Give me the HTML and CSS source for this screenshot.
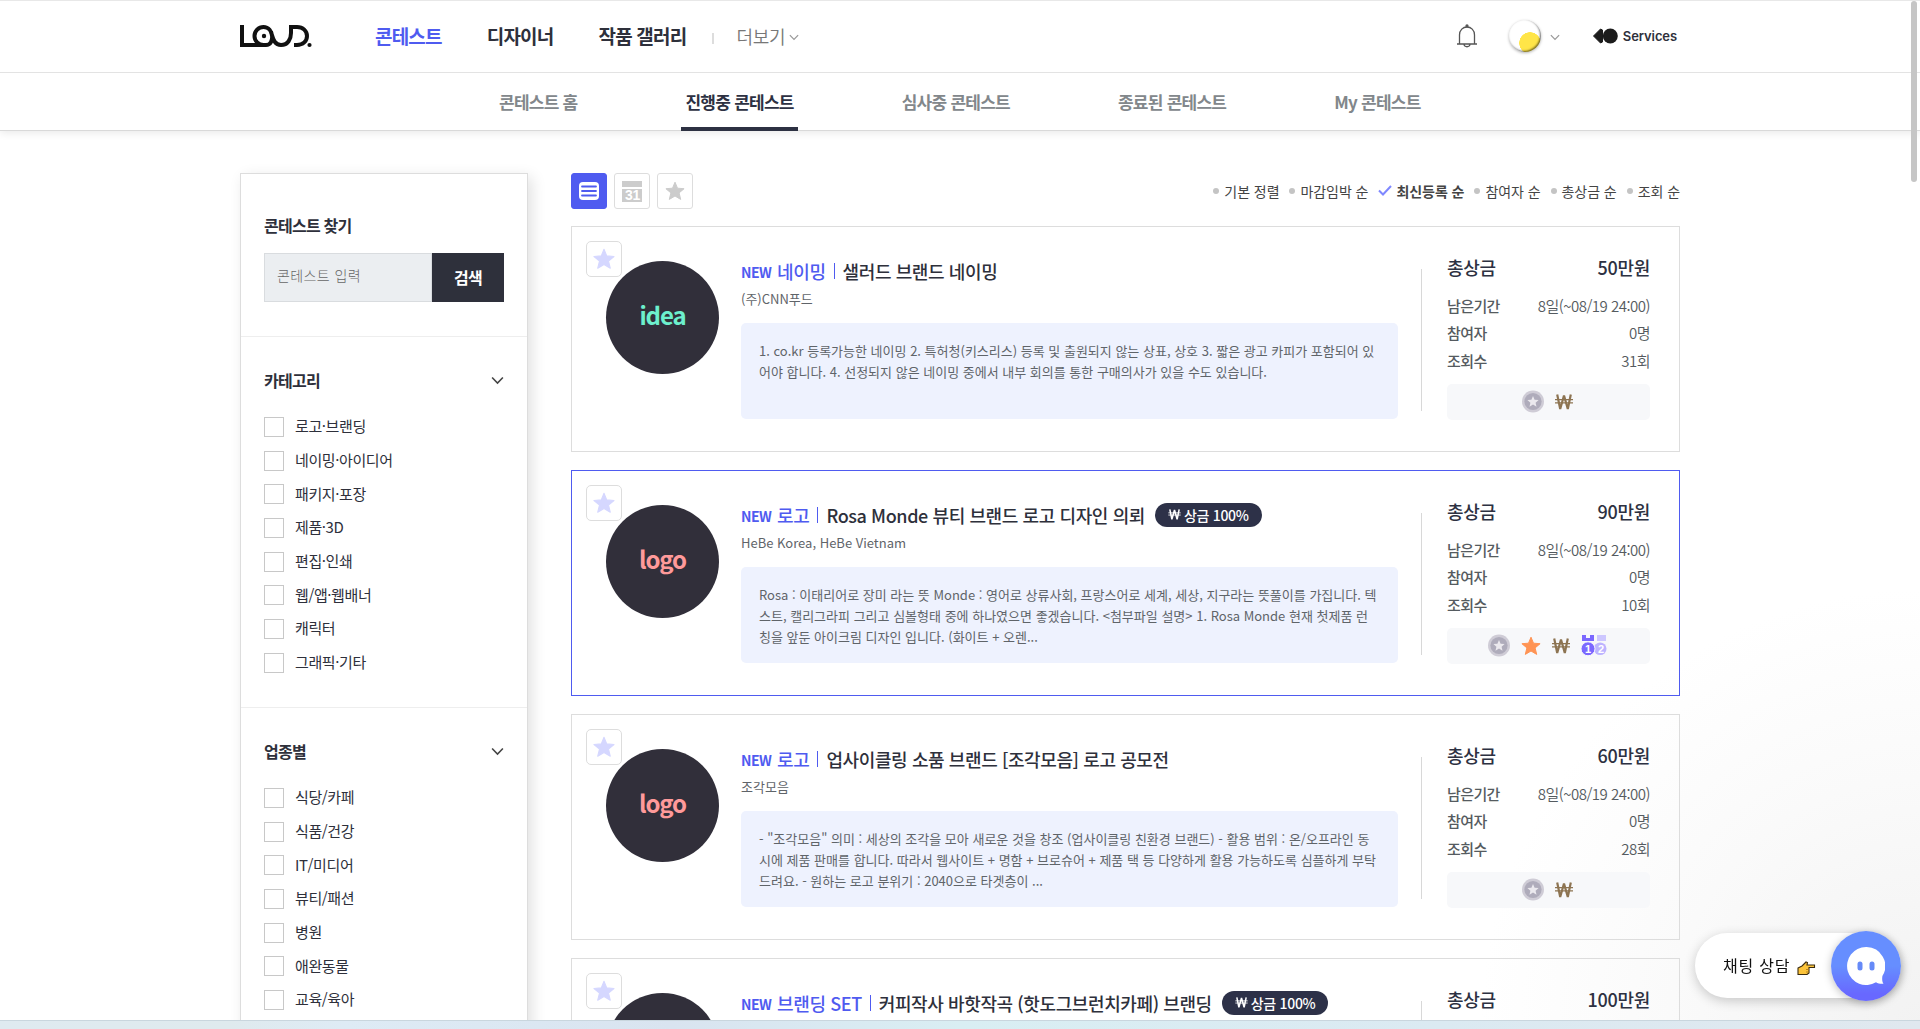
FILE: index.html
```html
<!DOCTYPE html>
<html lang="ko">
<head>
  <meta charset="UTF-8" />
  <meta name="viewport" content="width=device-width, initial-scale=1.0" />
  <title>진행중 콘테스트 - LOUD</title>
  <link rel="stylesheet" href="styles.css">
</head>
<body>
  <!-- 공통 아이콘 -->
  <svg class="sprite" aria-hidden="true">
    <symbol id="i-star" viewBox="0 0 20 20"><path d="M10 1.2l2.5 6 6.6.5-5 4.2 1.6 6.5L10 15l-5.7 3.4 1.6-6.5-5-4.2 6.6-.5z" fill="currentColor" stroke="currentColor" stroke-linejoin="round"/></symbol>
    <symbol id="i-down" viewBox="0 0 14 9"><path d="M1.2 1.2L7 7.2l5.8-6" fill="none" stroke="currentColor" stroke-width="1.7"/></symbol>
    <symbol id="i-medal" viewBox="0 0 22 22"><circle cx="11" cy="11" r="11" fill="#cfccd6"/><circle cx="11" cy="11" r="8.6" fill="#afacbb"/><path d="M11 5.6l1.6 3.6 4 .3-3 2.7.9 4-3.5-2.1-3.5 2.1.9-4-3-2.7 4-.3z" fill="#ebe9ee"/></symbol>
    <symbol id="i-won" viewBox="0 0 18 16"><path d="M2.2.5l3 14.5L9 1.5 12.8 15l3-14.5" fill="none" stroke="currentColor" stroke-width="2.2" stroke-linejoin="bevel"/><path d="M0 5.6h18M0 8.8h18" stroke="currentColor" stroke-width="1.2"/></symbol>
    <symbol id="i-rank" viewBox="0 0 26 21"><path d="M1 0h4v3h4V0h4v6H1z" fill="#7b68ff"/><path d="M16 0h9v6h-9z" fill="#cdc7ff"/><circle cx="19.2" cy="13.8" r="6.3" fill="#bdb4ff"/><circle cx="7" cy="13.8" r="7" fill="#7b68ff" stroke="#f8f9fb"/></symbol>
  </svg>

  <header>
    <div class="nav wrap">
      <svg class="logo" viewBox="0 0 72 24" fill="none" stroke="#111" stroke-width="4">
        <path d="M2 1v20h24c9 0 8-18-2.500-18a8.900 8.900 0 1 0 0 18M31 8c2 6 3 13 10 13 7 0 10-6 10-12V3h6c6 0 10 4 10 9s-4 9-10 9h-3"/>
        <circle cx="24" cy="12" r="2.200" fill="#111" stroke="none"/><circle cx="69.500" cy="21" r="2.100" fill="#111" stroke="none"/>
      </svg>
      <a class="menu on">콘테스트</a>
      <a class="menu designer">디자이너</a>
      <a class="menu gallery">작품 갤러리</a>
      <i class="bar"></i>
      <a class="more">더보기</a>
      <svg class="more-arrow"><use href="#i-down"/></svg>
      <div class="user">
        <svg class="bell" viewBox="0 0 22 24" fill="none" stroke="#555" stroke-width="1.300">
          <path d="M1 20h20M3.500 20V11c0-5 3.500-8 7.500-8s7.500 3 7.500 8v9M8 20.500c.5 3 5.500 3 6 0"/><circle cx="11" cy="1.900" r="1" fill="#555"/>
        </svg>
        <span class="avatar"></span>
        <svg class="user-arrow"><use href="#i-down"/></svg>
        <svg class="svc-mark" viewBox="0 0 25 16" fill="#1c1c1c"><path d="M.5 8L7.500 1 9.500 2v12l-2 1z" stroke="#1c1c1c" stroke-linejoin="round"/><circle cx="17.300" cy="8" r="7.500"/></svg>
        <span class="svc">Services</span>
      </div>
    </div>
    <nav class="subnav">
      <a>콘테스트 홈</a>
      <a class="on">진행중 콘테스트</a>
      <a>심사중 콘테스트</a>
      <a>종료된 콘테스트</a>
      <a>My 콘테스트</a>
    </nav>
  </header>

  <main>
    <aside>
      <section class="search">
        <h3>콘테스트 찾기</h3>
        <div class="search-form">
          <input type="text" placeholder="콘테스트 입력">
          <button>검색</button>
        </div>
      </section>
      <section class="filter">
        <h3>카테고리 <svg><use href="#i-down"/></svg></h3>
        <ul>
          <li><i></i>로고·브랜딩</li>
          <li><i></i>네이밍·아이디어</li>
          <li><i></i>패키지·포장</li>
          <li><i></i>제품·3D</li>
          <li><i></i>편집·인쇄</li>
          <li><i></i>웹/앱·웹배너</li>
          <li><i></i>캐릭터</li>
          <li><i></i>그래픽·기타</li>
        </ul>
      </section>
      <section class="filter">
        <h3>업종별 <svg><use href="#i-down"/></svg></h3>
        <ul>
          <li><i></i>식당/카페</li>
          <li><i></i>식품/건강</li>
          <li><i></i>IT/미디어</li>
          <li><i></i>뷰티/패션</li>
          <li><i></i>병원</li>
          <li><i></i>애완동물</li>
          <li><i></i>교육/육아</li>
        </ul>
      </section>
    </aside>

    <div class="content">
      <div class="toolbar">
        <a class="view on"><svg viewBox="0 0 20 18"><rect width="20" height="18" rx="4" fill="#fff"/><path d="M3 4.500h14M3 9h14M3 13.500h14" stroke="#4f5bf0" stroke-width="1.800" stroke-linecap="round"/></svg></a>
        <a class="view"><svg class="cal" viewBox="0 0 20 21"><path d="M0 0h20v6H0zM0 8h20v13H0z" fill="#ccc"/><text x="10.500" y="19.200" text-anchor="middle">31</text></svg></a>
        <a class="view"><svg><use href="#i-star"/></svg></a>
        <ul class="sort">
          <li>기본 정렬</li>
          <li>마감임박 순</li>
          <li class="on"><svg viewBox="0 0 14 11"><path d="M1 5.500l4 4L13 1" fill="none" stroke="#7f88ff" stroke-width="2"/></svg>최신등록 순</li>
          <li>참여자 순</li>
          <li>총상금 순</li>
          <li>조회 순</li>
        </ul>
      </div>

      <article class="card">
        <a class="fav"><svg><use href="#i-star"/></svg></a>
        <div class="thumb idea">idea</div>
        <div class="info">
          <h2><em>NEW</em><b>네이밍</b><i></i><span>샐러드 브랜드 네이밍</span></h2>
          <p class="company">(주)CNN푸드</p>
          <p class="desc">1. co.kr 등록가능한 네이밍 2. 특허청(키스리스) 등록 및 출원되지 않는 상표, 상호 3. 짧은 광고 카피가 포함되어 있<br>어야 합니다. 4. 선정되지 않은 네이밍 중에서 내부 회의를 통한 구매의사가 있을 수도 있습니다.</p>
        </div>
        <div class="side">
          <dl class="prize"><dt>총상금</dt><dd>50만원</dd></dl>
          <dl><dt>남은기간</dt><dd>8일(~08/19 24:00)</dd></dl>
          <dl><dt>참여자</dt><dd>0명</dd></dl>
          <dl><dt>조회수</dt><dd>31회</dd></dl>
          <div class="marks"><svg class="medal"><use href="#i-medal"/></svg><svg class="won"><use href="#i-won"/></svg></div>
        </div>
      </article>

      <article class="card pick">
        <a class="fav"><svg><use href="#i-star"/></svg></a>
        <div class="thumb">logo</div>
        <div class="info">
          <h2><em>NEW</em><b>로고</b><i></i><span>Rosa Monde 뷰티 브랜드 로고 디자인 의뢰</span><strong><svg><use href="#i-won"/></svg>상금 100%</strong></h2>
          <p class="company">HeBe Korea, HeBe Vietnam</p>
          <p class="desc">Rosa : 이태리어로 장미 라는 뜻 Monde : 영어로 상류사회, 프랑스어로 세계, 세상, 지구라는 뜻풀이를 가집니다. 텍<br>스트, 캘리그라피 그리고 심볼형태 중에 하나였으면 좋겠습니다. &lt;첨부파일 설명&gt; 1. Rosa Monde 현재 첫제품 런<br>칭을 앞둔 아이크림 디자인 입니다. (화이트 + 오렌...</p>
        </div>
        <div class="side">
          <dl class="prize"><dt>총상금</dt><dd>90만원</dd></dl>
          <dl><dt>남은기간</dt><dd>8일(~08/19 24:00)</dd></dl>
          <dl><dt>참여자</dt><dd>0명</dd></dl>
          <dl><dt>조회수</dt><dd>10회</dd></dl>
          <div class="marks"><svg class="medal"><use href="#i-medal"/></svg><svg class="hot"><use href="#i-star"/></svg><svg class="won"><use href="#i-won"/></svg><span class="rank"><svg><use href="#i-rank"/></svg><u>1</u><u>2</u></span></div>
        </div>
      </article>

      <article class="card">
        <a class="fav"><svg><use href="#i-star"/></svg></a>
        <div class="thumb">logo</div>
        <div class="info">
          <h2><em>NEW</em><b>로고</b><i></i><span>업사이클링 소품 브랜드 [조각모음] 로고 공모전</span></h2>
          <p class="company">조각모음</p>
          <p class="desc">- "조각모음" 의미 : 세상의 조각을 모아 새로운 것을 창조 (업사이클링 친환경 브랜드) - 활용 범위 : 온/오프라인 동<br>시에 제품 판매를 합니다. 따라서 웹사이트 + 명함 + 브로슈어 + 제품 택 등 다양하게 활용 가능하도록 심플하게 부탁<br>드려요. - 원하는 로고 분위기 : 2040으로 타겟층이 ...</p>
        </div>
        <div class="side">
          <dl class="prize"><dt>총상금</dt><dd>60만원</dd></dl>
          <dl><dt>남은기간</dt><dd>8일(~08/19 24:00)</dd></dl>
          <dl><dt>참여자</dt><dd>0명</dd></dl>
          <dl><dt>조회수</dt><dd>28회</dd></dl>
          <div class="marks"><svg class="medal"><use href="#i-medal"/></svg><svg class="won"><use href="#i-won"/></svg></div>
        </div>
      </article>

      <article class="card">
        <a class="fav"><svg><use href="#i-star"/></svg></a>
        <div class="thumb"></div>
        <div class="info">
          <h2><em>NEW</em><b>브랜딩 SET</b><i></i><span>커피작사 바핫작곡 (핫도그브런치카페) 브랜딩</span><strong><svg><use href="#i-won"/></svg>상금 100%</strong></h2>
        </div>
        <div class="side">
          <dl class="prize"><dt>총상금</dt><dd>100만원</dd></dl>
        </div>
      </article>
    </div>
  </main>

  <div class="chat">
    <span>채팅 상담</span>
    <svg class="point" viewBox="0 0 19 14"><path d="M1 7l4-2 4-4 1.500.5-.5 2.500h7.500v2.500H12v5.500l-2 1.500H1z" fill="#fcc43b" stroke="#3b2c10" stroke-width="1.100"/><path d="M9 8.500h3M9 11h3" stroke="#a87416" stroke-width=".8"/></svg>
    <div class="chat-btn">
      <svg viewBox="0 0 38 38"><path d="M19 0a19 19 0 1 0 10 35.200c2 1.200 5 2 7.500 1.500C35 34.500 35 32 35.400 29A19 19 0 0 0 19 0z" fill="#fff"/><rect x="10.500" y="14.500" width="5" height="9" rx="2.500" fill="#668af8"/><rect x="22.500" y="14.500" width="5" height="9" rx="2.500" fill="#668af8"/></svg>
    </div>
  </div>
  <div class="scrollbar"></div>
  <div class="desk"></div>
</body>
</html>
```
FILE: styles.css
```css
/* ======================
   Reset & Base
   ====================== */
*, *::before, *::after {
  box-sizing: border-box;
  margin: 0;
  padding: 0;
}
html, body {
  height: 100%;
  overflow: hidden;
}
body {
  font-family: 'Noto Sans CJK KR', sans-serif;
  font-size: 15px;
  letter-spacing: -0.3px;
  color: #2e303b;
  white-space: nowrap;
  background: radial-gradient(circle at 1920px 1029px, #f2f2f2 0, #fafafa 250px, #fff 440px);
}
ul {
  list-style: none;
}
i, em {
  font-style: normal;
}
svg {
  display: block;
  flex: none;
}
.sprite {
  position: absolute;
  width: 0;
  height: 0;
}
.wrap {
  width: 1440px;
  margin: 0 auto;
}

/* ======================
   Header
   ====================== */
header {
  height: 131px;
  background: #fff;
  border-top: 1px solid #e8e8e8;
  border-bottom: 1px solid #d9d9d9;
  box-shadow: 0 2px 8px rgba(0, 0, 0, 0.09);
}
.nav {
  display: flex;
  align-items: center;
  height: 71px;
  padding-bottom: 1px;
}
.logo {
  width: 72px;
  height: 24px;
}
.menu {
  margin-left: 63px;
  font-size: 19px;
  font-weight: 700;
  letter-spacing: -0.8px;
  line-height: 26px;
  padding-bottom: 1px;
}
.menu.on {
  color: #4f5bf0;
}
.menu.designer {
  margin-left: 45px;
}
.menu.gallery {
  margin-left: 45px;
}
.bar {
  width: 2px;
  height: 11px;
  margin: 4px 22px 0 26px;
  background: #ddd;
}
.more {
  padding-bottom: 1px;
  font-size: 18px;
  font-weight: 350;
  line-height: 26px;
  color: #777;
}
.more-arrow {
  width: 10px;
  height: 7px;
  margin: 3px 0 0 4px;
  color: #999;
}
.user {
  display: flex;
  align-items: center;
  margin-left: auto;
}
.bell {
  width: 22px;
  height: 24px;
}
.avatar {
  width: 32px;
  height: 32px;
  margin-left: 31px;
  border-radius: 50%;
  background: radial-gradient(circle at 21px 23px, #ffe548 0 10.5px, #fff 11px);
  box-shadow: 0 1px 3px rgba(0, 0, 0, 0.3), inset -1px -1px 2px rgba(0, 0, 0, 0.55);
}
.user-arrow {
  width: 10px;
  height: 7px;
  margin: 2px 33px 0 9px;
  color: #999;
}
.svc-mark {
  width: 25px;
  height: 16px;
}
.svc {
  margin: 0 3px 0 5px;
  font: 600 13px 'Inter', sans-serif;
  letter-spacing: -0.1px;
}
.subnav {
  display: flex;
  height: 58px;
  padding-left: 495px;
  border-top: 1px solid #e3e3e3;
  font-size: 17px;
  font-weight: 700;
  letter-spacing: -0.75px;
  line-height: 57px;
  color: #82878b;
}
.subnav a {
  height: 58px;
  padding: 0 4px;
  margin-right: 100px;
}
.subnav .on {
  color: #2d3142;
  border-bottom: 4px solid #2d3142;
}

/* ======================
   Sidebar
   ====================== */
main {
  display: flex;
  align-items: flex-start;
  gap: 43px;
  height: calc(100vh - 131px);
  padding: 42px 240px 0;
  overflow: hidden;
}
aside {
  width: 288px;
  height: 1100px;
  background: #fff;
  border: 1px solid #ddd;
  box-shadow: 4px 4px 14px rgba(0, 0, 0, 0.12);
}
aside section {
  padding: 0 23px;
  border-bottom: 1px solid #eee;
}
aside h3 {
  display: flex;
  justify-content: space-between;
  align-items: center;
  font-size: 16px;
  font-weight: 700;
  letter-spacing: -0.75px;
  line-height: 24px;
}
aside h3 svg {
  width: 13px;
  height: 9px;
  color: #444;
}
.search {
  height: 163px;
  padding-top: 39px;
}
.search-form {
  display: flex;
  height: 49px;
  margin-top: 16px;
}
.search input {
  width: 168px;
  padding: 0 12px 5px;
  border: 1px solid #d9dcdf;
  background: #ebeef1;
  font: 300 14px 'Noto Sans CJK KR', sans-serif;
  letter-spacing: 0.4px;
}
.search input::placeholder {
  color: #666;
}
.search button {
  width: 72px;
  padding-bottom: 2px;
  border: 0;
  background: #2e303b;
  color: #fff;
  font: 700 16px 'Noto Sans CJK KR', sans-serif;
  letter-spacing: -0.8px;
}
.filter {
  height: 371px;
}
.filter h3 {
  padding-top: 31px;
}
.filter ul {
  margin-top: 18px;
}
.filter li {
  display: flex;
  align-items: center;
  height: 33.7px;
  font-size: 15px;
  letter-spacing: -0.4px;
  line-height: 20px;
  padding-bottom: 1px;
}
.filter li i {
  width: 20px;
  height: 20px;
  margin: 1px 11px 0 0;
  border: 1px solid #c8c8c8;
}

/* ======================
   Toolbar
   ====================== */
.content {
  width: 1109px;
}
.toolbar {
  display: flex;
  gap: 7px;
  height: 53px;
}
.view {
  display: flex;
  align-items: center;
  justify-content: center;
  width: 36px;
  height: 36px;
  border: 1px solid #ddd;
  border-radius: 3px;
  color: #ccc;
}
.view.on {
  background: #4f5bf0;
  border-color: #4f5bf0;
}
.view svg {
  width: 20px;
  height: 20px;
}
.view svg.cal {
  height: 21px;
}
.cal text {
  font: 700 14px 'Liberation Sans', sans-serif;
  fill: #fff;
}
.sort {
  display: flex;
  align-items: center;
  gap: 10px;
  height: 35px;
  margin-left: auto;
  font-size: 14px;
  letter-spacing: -0.06px;
  color: #444;
}
.sort li {
  display: flex;
  align-items: center;
}
.sort li::before {
  content: '';
  width: 6px;
  height: 6px;
  margin-right: 5px;
  border-radius: 50%;
  background: #c4c4c4;
}
.sort .on {
  font-weight: 700;
}
.sort .on::before {
  display: none;
}
.sort .on svg {
  width: 14px;
  height: 11px;
  margin-right: 4px;
}

/* ======================
   Cards
   ====================== */
.card {
  position: relative;
  display: flex;
  height: 226px;
  margin-bottom: 18px;
  padding: 0 29px 0 34px;
  border: 1px solid #ddd;
}
.card.pick {
  border-color: #4f5bf0;
}
.fav {
  position: absolute;
  left: 14px;
  top: 14px;
  display: flex;
  align-items: center;
  justify-content: center;
  width: 36px;
  height: 36px;
  border: 1px solid #ddd;
  border-radius: 5px;
  color: #d5d7ff;
}
.fav svg {
  width: 22px;
  height: 22px;
}
.thumb {
  position: relative;
  width: 113px;
  height: 113px;
  margin-top: 34px;
  border-radius: 50%;
  background: #312f3a;
  color: #ff9a9a;
  font-size: 24px;
  font-weight: 700;
  line-height: 108px;
  letter-spacing: -1.1px;
  text-align: center;
}
.thumb.idea {
  color: #6df0cd;
}
.info {
  width: 657px;
  margin-left: 22px;
  padding-top: 32px;
}
.info h2 {
  display: flex;
  align-items: center;
  height: 24px;
  font-size: 18px;
  font-weight: 500;
  letter-spacing: -0.4px;
}
.info em {
  padding-top: 2px;
  font-size: 14px;
  font-weight: 700;
  color: #4f5bf0;
  letter-spacing: -0.6px;
}
.info b {
  margin-left: 6px;
  font-weight: 500;
  color: #4f5bf0;
}
.info h2 i {
  width: 1px;
  height: 16px;
  margin: 0 8px;
  background: #4f5bf0;
}
.info strong {
  display: flex;
  align-items: center;
  height: 24px;
  margin: 0 0 0 10px;
  padding: 0 13px 1px;
  border-radius: 12px;
  background: #2d3148;
  color: #fff;
  font-size: 14px;
  font-weight: 500;
  letter-spacing: -0.3px;
}
.info strong svg {
  width: 13px;
  height: 11px;
  margin-right: 3px;
}
.company {
  margin-top: 6px;
  font-size: 13px;
  letter-spacing: 0;
  line-height: 20px;
  color: #5f6469;
}
.desc {
  height: 96px;
  margin-top: 14px;
  padding: 17px 18px 0;
  border-radius: 5px;
  background: #eef2fe;
  font-size: 13px;
  letter-spacing: 0;
  line-height: 21px;
  color: #5f6469;
}
.side {
  position: relative;
  width: 203px;
  margin-left: 49px;
  padding-top: 26px;
}
.side::before {
  content: '';
  position: absolute;
  left: -26px;
  top: 42px;
  width: 1px;
  height: 142px;
  background: #d8d8d8;
}
.side dl {
  display: flex;
  justify-content: space-between;
  font-size: 15px;
  line-height: 27.5px;
  color: #555b60;
}
.side dt {
  font-weight: 500;
  letter-spacing: -0.6px;
}
.side dd {
  font-weight: 350;
  letter-spacing: -0.5px;
}
.side .prize {
  margin-bottom: 10.5px;
  font-size: 18px;
  line-height: 28px;
  color: #2d3142;
}
.prize dt {
  letter-spacing: -0.3px;
}
.side .prize dd {
  font-weight: 500;
  letter-spacing: -0.3px;
}
.marks {
  display: flex;
  align-items: center;
  justify-content: center;
  gap: 11px;
  height: 36px;
  margin-top: 10px;
  padding: 0 2px 1px 0;
  border-radius: 5px;
  background: #f7f8fa;
}
.medal {
  width: 22px;
  height: 23px;
}
.won {
  width: 18px;
  height: 16px;
  color: #8d7452;
}
.hot {
  width: 20px;
  height: 20px;
  color: #ff9454;
}
.rank {
  display: flex;
  position: relative;
}
.rank svg {
  width: 26px;
  height: 21px;
}
.rank u {
  position: absolute;
  left: 4px;
  top: 7px;
  color: #fff;
  font: 700 11px/14px 'Liberation Sans', sans-serif;
  text-decoration: none;
}
.rank u + u {
  left: 17px;
}

/* ======================
   Chat
   ====================== */
.chat {
  position: fixed;
  left: 1695px;
  top: 933px;
  display: flex;
  align-items: center;
  width: 206px;
  height: 65px;
  padding: 0 0 2px 28px;
  border-radius: 33px;
  background: #fff;
  box-shadow: 0 3px 12px rgba(0, 0, 0, 0.2);
  color: #111;
  font-size: 16px;
  letter-spacing: 0.8px;
}
.point {
  width: 19px;
  height: 14px;
  margin: 7px 0 0 7px;
}
.chat-btn {
  position: absolute;
  right: 0;
  top: -2px;
  width: 70px;
  height: 70px;
  padding: 16px;
  border-radius: 50%;
  background: linear-gradient(#668eff 50%, #6868ff 90%);
  box-shadow: 0 2px 8px rgba(0, 0, 0, 0.25);
}
.scrollbar {
  position: fixed;
  right: 3px;
  top: 1px;
  width: 6px;
  height: 181px;
  border-radius: 3px;
  background: #c6c6c6;
}
.desk {
  position: fixed;
  left: 0;
  right: 0;
  bottom: 0;
  height: 9px;
  border-top: 1px solid #c9d6de;
  background: linear-gradient(90deg, #dfeaf0, #dfeaee 12%, #deebf5 18%, #d9e4f0 35%, #d9eef3 50%, #dbeaf2 75%, #e0e8ef);
}
```
